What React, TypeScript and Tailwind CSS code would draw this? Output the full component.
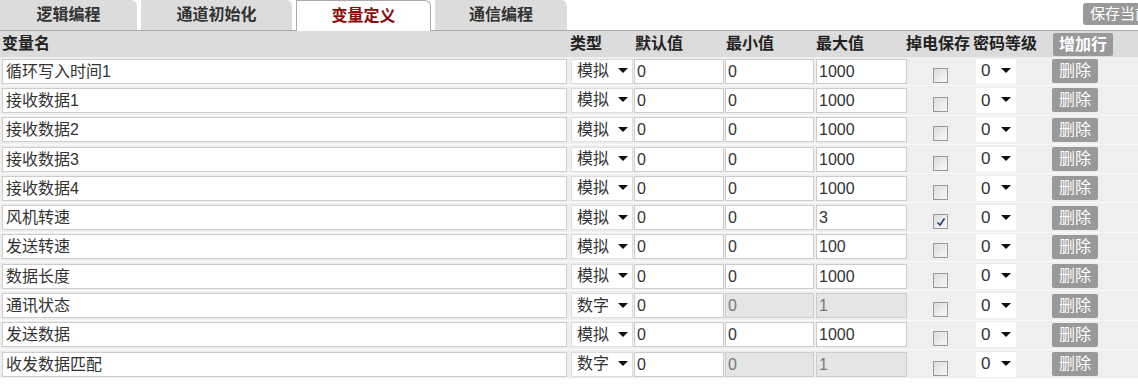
import React from "react";

type Row = { name: string; type: string; def: string; min: string; max: string; checked?: boolean; digital?: boolean };

const rows: Row[] = [
  { name: "循环写入时间1", type: "模拟", def: "0", min: "0", max: "1000" },
  { name: "接收数据1", type: "模拟", def: "0", min: "0", max: "1000" },
  { name: "接收数据2", type: "模拟", def: "0", min: "0", max: "1000" },
  { name: "接收数据3", type: "模拟", def: "0", min: "0", max: "1000" },
  { name: "接收数据4", type: "模拟", def: "0", min: "0", max: "1000" },
  { name: "风机转速", type: "模拟", def: "0", min: "0", max: "3", checked: true },
  { name: "发送转速", type: "模拟", def: "0", min: "0", max: "100" },
  { name: "数据长度", type: "模拟", def: "0", min: "0", max: "1000" },
  { name: "通讯状态", type: "数字", def: "0", min: "0", max: "1", digital: true },
  { name: "发送数据", type: "模拟", def: "0", min: "0", max: "1000" },
  { name: "收发数据匹配", type: "数字", def: "0", min: "0", max: "1", digital: true },
];

const FONT = "font-['Arial','Liberation_Sans','Noto_Sans_CJK_SC',sans-serif]";

function Arrow() {
  return (
    <svg width="10" height="6" viewBox="0 0 10 6" className="shrink-0">
      <path d="M0 0 L10 0 L5 5 Z" fill="#111" />
    </svg>
  );
}

function Tab({ label, active, w }: { label: string; active?: boolean; w: string }) {
  if (active) {
    return (
      <div className={`${w} h-[31px] -mb-px bg-white border border-b-0 border-[#aaa] rounded-tr-[6px] flex items-center justify-center text-[16px] font-bold text-[#8b0a0a] relative z-10`}>
        {label}
      </div>
    );
  }
  return (
    <div className={`${w} h-[30px] bg-[#dcdcdc] rounded-tr-[6px] flex items-center justify-center text-[16px] font-bold text-[#333]`}>
      {label}
    </div>
  );
}

export default function App() {
  return (
    <div className={`w-[1138px] h-[391px] bg-white overflow-hidden ${FONT} text-[#333]`}>
      <div className="flex items-end h-[30px] relative">
        <div className="flex items-end gap-[4px]">
          <Tab label="逻辑编程" w="w-[137px]" />
          <Tab label="通道初始化" w="w-[151px]" />
          <Tab label="变量定义" w="w-[135px]" active />
          <Tab label="通信编程" w="w-[132px]" />
        </div>
        <div className="absolute left-[1083px] top-[3px] h-[22px] pl-[7px] w-[60px] overflow-hidden bg-[#999] rounded-l-[3px] text-white text-[15px] leading-[22px] whitespace-nowrap">
          保存当前
        </div>
      </div>
      <div className="border-t border-[#aaa] bg-[#dcdcdc] h-[27px] flex items-center text-[16px] font-bold text-[#222]">
        <div className="w-[568px] pl-[2px]">变量名</div>
        <div className="w-[65px] pl-[2px]">类型</div>
        <div className="w-[91px] pl-[2px]">默认值</div>
        <div className="w-[90px] pl-[2px]">最小值</div>
        <div className="w-[92px] pl-[2px]">最大值</div>
        <div className="w-[67px]">掉电保存</div>
        <div className="w-[80px]">密码等级</div>
        <div className="h-[23px] w-[60px] text-center bg-[#999] text-white leading-[23px] rounded-[2px]">增加行</div>
      </div>
      <div>
        {rows.map((r, i) => (
          <div key={i} className="h-[29.3px] bg-[#efefef] border-b border-[#fafafa] flex items-center text-[16px]">
            <div className="w-[568px] pl-[2px]">
              <div className="h-[25px] w-[565px] bg-white border border-[#ccc] pl-[3px] leading-[23px] text-[#333]">{r.name}</div>
            </div>
            <div className="w-[65px] pl-[3px]">
              <div className="h-[25px] w-[62px] bg-white border border-[#ddd] pl-[5px] pr-[4px] flex items-center justify-between">
                <span>{r.type}</span>
                <Arrow />
              </div>
            </div>
            <div className="w-[91px] pl-[1px]">
              <div className="h-[25px] w-[90px] bg-white border border-[#ccc] pl-[2px] leading-[23px]">{r.def}</div>
            </div>
            <div className="w-[90px] pl-[1px]">
              <div className={`h-[25px] w-[89px] border border-[#ccc] pl-[2px] leading-[23px] ${r.digital ? "bg-[#e5e5e5] text-[#777]" : "bg-white"}`}>{r.min}</div>
            </div>
            <div className="w-[93px] pl-[2px]">
              <div className={`h-[25px] w-[91px] border border-[#ccc] pl-[2px] leading-[23px] ${r.digital ? "bg-[#e5e5e5] text-[#777]" : "bg-white"}`}>{r.max}</div>
            </div>
            <div className="w-[68px] pl-[26px] translate-y-[4px]">
              <div className="w-[15px] h-[15px] border border-[#999] bg-gradient-to-br from-[#dcdcdc] to-[#f8f8f8] flex items-center justify-center">
                {r.checked && (
                  <svg width="10" height="10" viewBox="0 0 10 10">
                    <path d="M1.5 5.5 L4 8 L8.5 1.5" stroke="#2a3f78" strokeWidth="1.6" fill="none" />
                  </svg>
                )}
              </div>
            </div>
            <div className="w-[77px] pl-[1px]">
              <div className="h-[25px] w-[40px] bg-white pl-[5px] pr-[5px] flex items-center justify-between text-[17px]">
                <span>0</span>
                <Arrow />
              </div>
            </div>
            <div className="h-[24px] w-[46px] text-center bg-[#999] text-white text-[16px] leading-[24px] rounded-[2px]">删除</div>
          </div>
        ))}
      </div>
    </div>
  );
}
